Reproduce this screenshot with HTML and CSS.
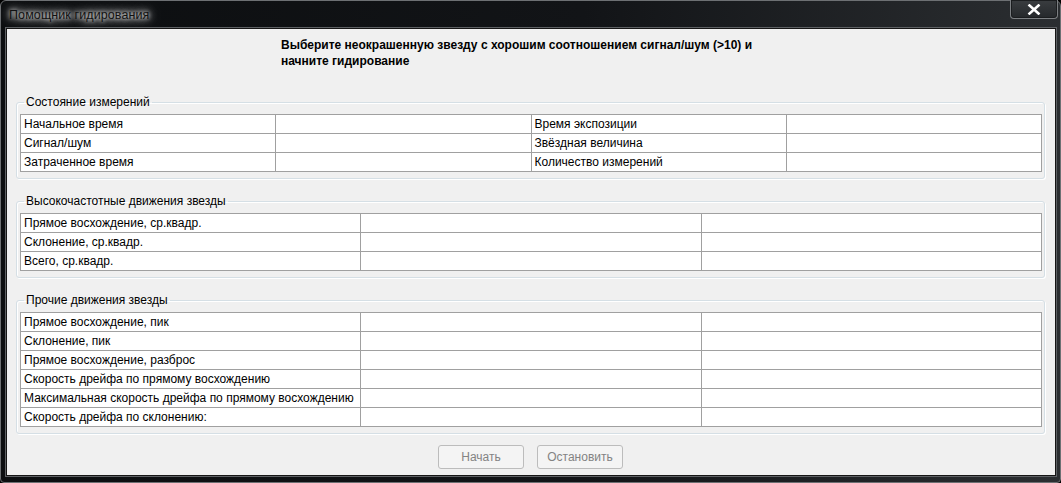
FILE: index.html
```html
<!DOCTYPE html>
<html lang="ru">
<head>
<meta charset="utf-8">
<title>Помощник гидирования</title>
<link rel="stylesheet" href="styles.css">
</head>
<body>
<div class="window">
  <div class="titlebar">
    <span class="title">Помощник гидирования</span>
    <button class="close" aria-label="Закрыть">
      <svg width="14" height="11" viewBox="0 0 14 11"><path d="M2.5 1.5 L11.5 9.5 M11.5 1.5 L2.5 9.5" stroke="#fff" stroke-width="2.6" stroke-linecap="square"/></svg>
    </button>
  </div>
  <div class="client">
    <div class="instruction">Выберите неокрашенную звезду с хорошим соотношением сигнал/шум (&gt;10) и<br>начните гидирование</div>

    <fieldset class="group">
      <legend>Состояние измерений</legend>
      <table class="grid cols4">
        <tr><td>Начальное время</td><td></td><td>Время экспозиции</td><td></td></tr>
        <tr><td>Сигнал/шум</td><td></td><td>Звёздная величина</td><td></td></tr>
        <tr><td>Затраченное время</td><td></td><td>Количество измерений</td><td></td></tr>
      </table>
    </fieldset>

    <fieldset class="group">
      <legend>Высокочастотные движения звезды</legend>
      <table class="grid cols3">
        <tr><td>Прямое восхождение, ср.квадр.</td><td></td><td></td></tr>
        <tr><td>Склонение, ср.квадр.</td><td></td><td></td></tr>
        <tr><td>Всего, ср.квадр.</td><td></td><td></td></tr>
      </table>
    </fieldset>

    <fieldset class="group">
      <legend>Прочие движения звезды</legend>
      <table class="grid cols3">
        <tr><td>Прямое восхождение, пик</td><td></td><td></td></tr>
        <tr><td>Склонение, пик</td><td></td><td></td></tr>
        <tr><td>Прямое восхождение, разброс</td><td></td><td></td></tr>
        <tr><td>Скорость дрейфа по прямому восхождению</td><td></td><td></td></tr>
        <tr><td>Максимальная скорость дрейфа по прямому восхождению</td><td></td><td></td></tr>
        <tr><td>Скорость дрейфа по склонению:</td><td></td><td></td></tr>
      </table>
    </fieldset>

    <div class="buttons">
      <button class="btn" disabled>Начать</button>
      <button class="btn" disabled>Остановить</button>
    </div>
  </div>
</div>
</body>
</html>
```
FILE: styles.css
```css
html, body {
  margin: 0;
  padding: 0;
  background: #000;
}
body {
  width: 1061px;
  height: 483px;
  overflow: hidden;
  font-family: "Liberation Sans", Arial, sans-serif;
  font-size: 12px;
}
.window {
  box-sizing: border-box;
  width: 1061px;
  height: 483px;
  border: 1px solid #6d7073;
  border-radius: 6px 6px 4px 4px;
  background: linear-gradient(90deg, #0c0e10 0%, #121417 55%, #2b2e31 100%);
  display: flex;
  flex-direction: column;
  padding: 0 4px 6px 5px;
}
.titlebar {
  height: 27px;
  flex: none;
  display: flex;
  align-items: flex-start;
  justify-content: space-between;
}
.title {
  margin: 7px 0 0 3px;
  color: #111;
  font-size: 12.5px;
  text-shadow: 0 0 4px #fff, 0 0 8px rgba(255,255,255,0.9), 0 0 14px rgba(255,255,255,0.7);
  letter-spacing: 0.1px;
}
.close {
  width: 48px;
  height: 19px;
  margin-top: -1px;
  margin-right: -2px;
  border: 1px solid #7c7f82;
  border-top: none;
  border-radius: 0 0 4px 4px;
  background: linear-gradient(#3a3d40, #25282b);
  box-shadow: inset 0 0 0 1px #1b1d1f;
  display: flex;
  align-items: center;
  justify-content: center;
  padding: 0;
}
.client {
  flex: 1;
  background: #f0f0f0;
  border: 1px solid #151515;
  box-shadow: 0 0 0 1px #5e6164;
  display: flex;
  flex-direction: column;
  padding: 0 10px 0 9px;
  color: #000;
}
.instruction {
  font-weight: bold;
  line-height: 16px;
  padding: 8px 0 0 265px;
  margin-bottom: 26px;
}
.group {
  margin: 0 0 15px 0;
  border: 1px solid #d5dfe5;
  border-radius: 3px;
  box-shadow: inset 1px 1px 0 #fff, 1px 1px 0 #fff;
  padding: 4px 2px 6px 3px;
  min-width: 0;
}
.group legend {
  padding: 0 2px;
  margin-left: 4px;
  line-height: 15px;
  font-size: 12px;
}
.grid {
  width: 100%;
  border-collapse: collapse;
  table-layout: fixed;
  background: #fff;
}
.grid td {
  border: 1px solid #a0a0a0;
  height: 18px;
  padding: 0 3px;
  white-space: nowrap;
  line-height: 18px;
}
.buttons {
  display: flex;
  justify-content: center;
  gap: 13px;
  margin-top: -4px;
}
.btn {
  width: 86px;
  height: 24px;
  border: 1px solid #bcbcbc;
  border-radius: 3px;
  background: #f4f4f4;
  color: #838383;
  font-family: "Liberation Sans", Arial, sans-serif;
  font-size: 12px;
  padding: 0;
}
```
